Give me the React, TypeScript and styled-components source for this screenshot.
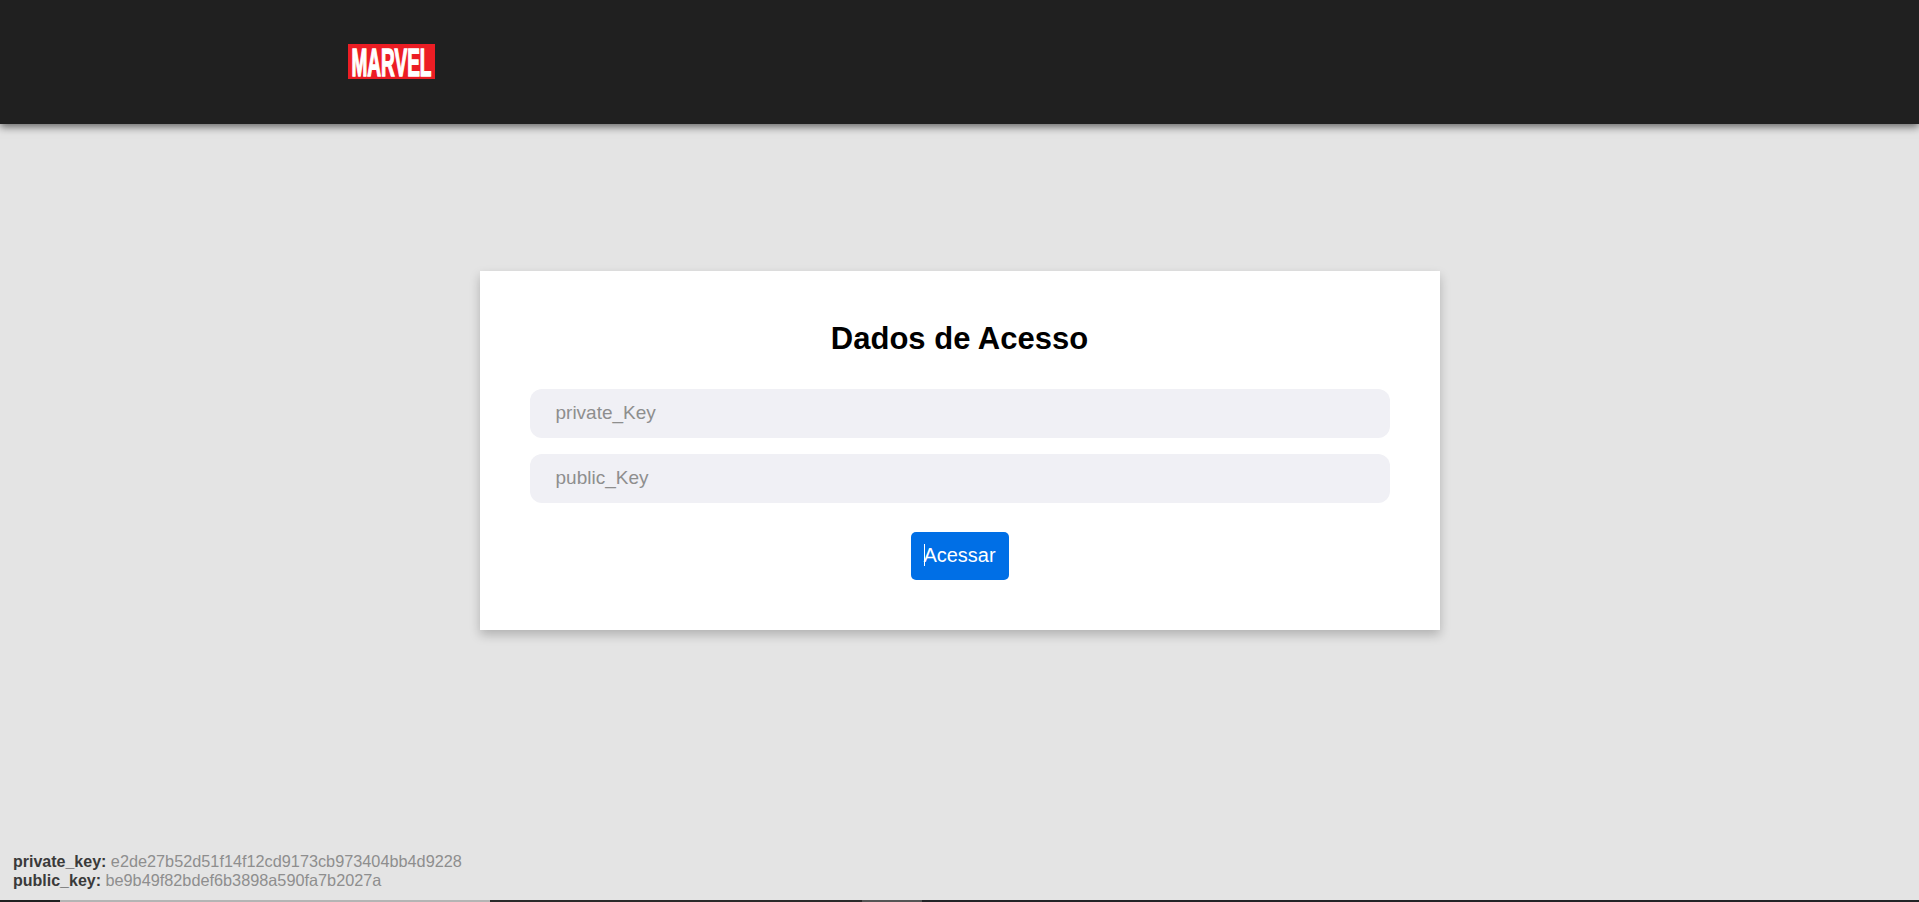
import styled, { createGlobalStyle } from 'styled-components';

const GlobalStyle = createGlobalStyle`
  html,
  body {
    margin: 0;
    padding: 0;
  }

  body {
    background: #e4e4e4;
    font-family: 'Liberation Sans', Arial, sans-serif;
  }

  * {
    box-sizing: border-box;
  }
`;

const Page = styled.div`
  display: flex;
  flex-direction: column;
  height: 100vh;
  overflow: hidden;
`;

const Header = styled.header`
  flex-shrink: 0;
  display: flex;
  align-items: center;
  height: 124px;
  padding: 0 0 1px 348px;
  background: #202020;
  box-shadow: 0 3px 8px rgba(0, 0, 0, 0.55);
`;

const Logo = styled.svg`
  display: block;
  width: 87px;
  height: 35px;
  overflow: visible;
`;

const LogoText = styled.text`
  font-family: 'Liberation Sans', Arial, sans-serif;
  font-size: 39px;
  font-weight: 700;
  fill: #fff;
  stroke: #fff;
  stroke-width: 1.5px;
`;

const Main = styled.main`
  flex: 1;
  display: flex;
  justify-content: center;
  align-items: flex-start;
  padding-top: 147px;
`;

const Card = styled.section`
  width: 960px;
  padding: 50px;
  background: #fff;
  box-shadow: 0 5px 10px rgba(0, 0, 0, 0.22);
`;

const Title = styled.h1`
  margin: 0 0 33px;
  font-size: 31px;
  line-height: 35px;
  font-weight: 700;
  text-align: center;
  color: #000;
`;

const Form = styled.form`
  display: flex;
  flex-direction: column;
  align-items: center;
  gap: 16px;
`;

const Input = styled.input`
  display: block;
  width: 100%;
  height: 49px;
  padding: 0 26px 2px;
  border: 0;
  border-radius: 12px;
  outline: none;
  background: #f0f0f5;
  font-family: inherit;
  font-size: 19px;
  color: #333;

  &::placeholder {
    color: #8e8e8e;
    opacity: 1;
  }
`;

const Button = styled.button`
  position: relative;
  margin-top: 13px;
  width: 98px;
  height: 48px;
  padding: 0 0 2px;
  border: 0;
  border-radius: 5px;
  background: #006fe6;
  font-family: inherit;
  font-size: 20px;
  color: #fff;
`;

const Caret = styled.span`
  position: absolute;
  left: 13px;
  top: 12px;
  width: 1px;
  height: 22px;
  background: #fff;
`;

const Keys = styled.div`
  flex-shrink: 0;
  padding: 0 0 10px 13px;
  font-size: 16px;
  line-height: 19px;
  color: #8e8e8e;
`;

const KeyLine = styled.div`
  white-space: nowrap;
`;

const KeyName = styled.strong`
  color: #3a3a3a;
`;

const KeyValue = styled.span`
  font-size: 16.28px;
`;

const Strip = styled.div`
  flex-shrink: 0;
  display: flex;
  height: 2px;
`;

const StripPart = styled.span<{ $width?: number; $tone: string }>`
  flex: ${props => (props.$width ? `0 0 ${props.$width}px` : '1')};
  background: ${props => props.$tone};
`;

const keys = [
  { name: 'private_key:', value: 'e2de27b52d51f14f12cd9173cb973404bb4d9228' },
  { name: 'public_key:', value: 'be9b49f82bdef6b3898a590fa7b2027a' },
];

export default function App() {
  return (
    <>
      <GlobalStyle />
      <Page>
        <Header>
          <Logo viewBox="0 0 87 35" role="img" aria-label="Marvel">
            <rect width="87" height="35" fill="#ec1d24" />
            <LogoText x="3.5" y="31.5" textLength="80" lengthAdjust="spacingAndGlyphs">
              MARVEL
            </LogoText>
          </Logo>
        </Header>
        <Main>
          <Card>
            <Title>Dados de Acesso</Title>
            <Form onSubmit={event => event.preventDefault()}>
              <Input placeholder="private_Key" />
              <Input placeholder="public_Key" />
              <Button type="submit">
                <Caret />
                Acessar
              </Button>
            </Form>
          </Card>
        </Main>
        <Keys>
          {keys.map(key => (
            <KeyLine key={key.name}>
              <KeyName>{key.name}</KeyName> <KeyValue>{key.value}</KeyValue>
            </KeyLine>
          ))}
        </Keys>
        <Strip>
          <StripPart $width={60} $tone="#202020" />
          <StripPart $width={430} $tone="#b4b4b4" />
          <StripPart $width={372} $tone="#2a2a2a" />
          <StripPart $width={60} $tone="#555" />
          <StripPart $tone="#232326" />
        </Strip>
      </Page>
    </>
  );
}
